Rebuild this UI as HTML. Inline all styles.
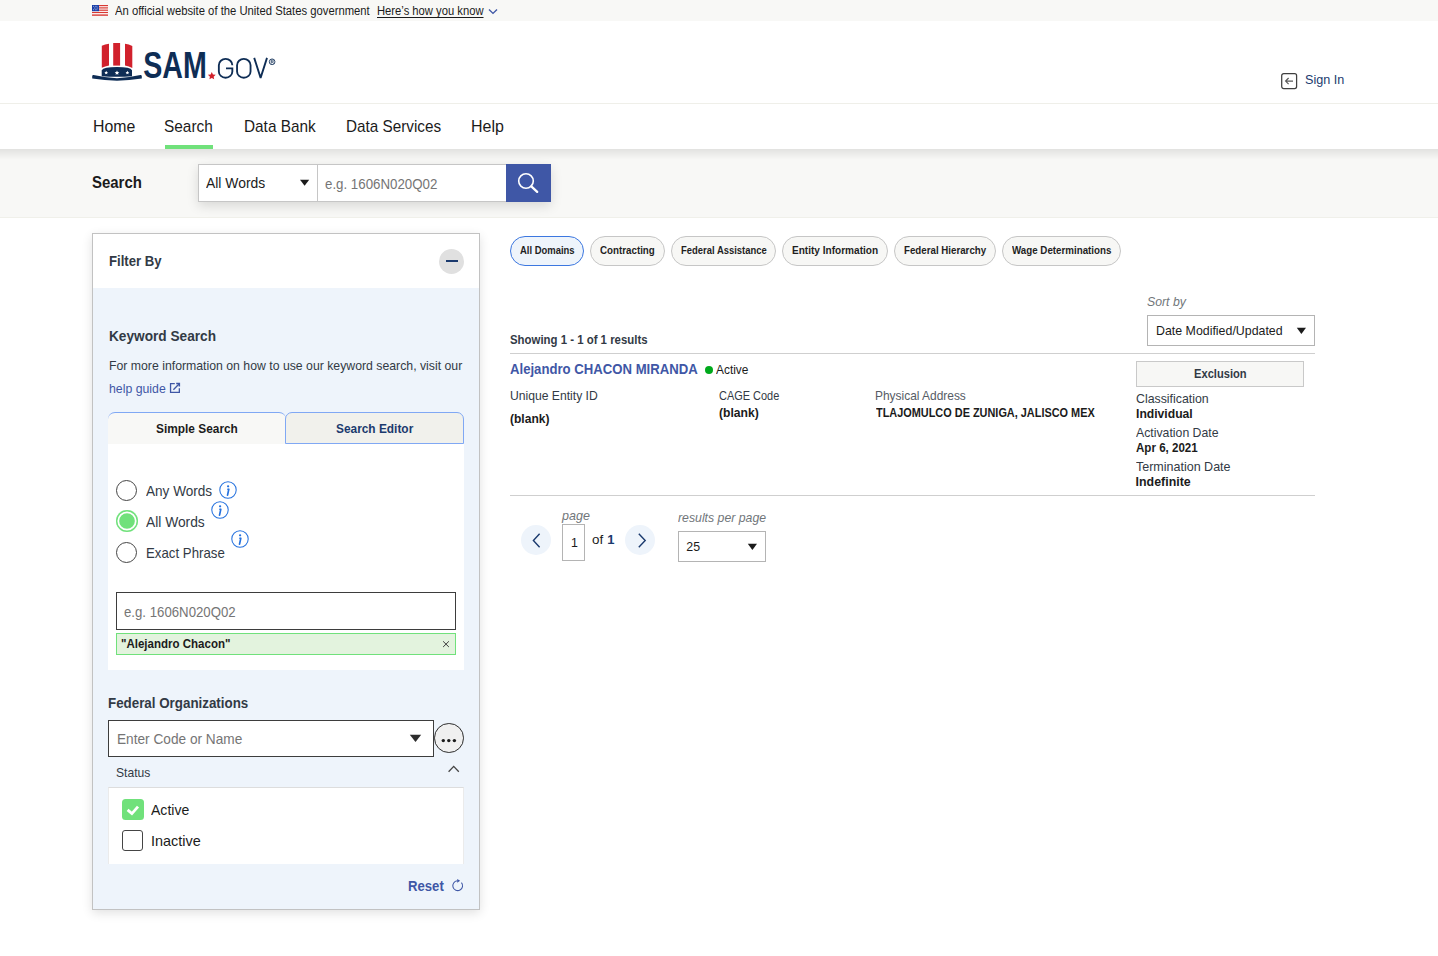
<!DOCTYPE html>
<html><head><meta charset="utf-8"><title>SAM.gov Search</title>
<style>
html,body{margin:0;padding:0;}
body{width:1438px;height:956px;overflow:hidden;background:#fff;position:relative;font-family:"Liberation Sans",sans-serif;}
.t{position:absolute;white-space:nowrap;line-height:1;font-family:"Liberation Sans",sans-serif;}
.b{position:absolute;box-sizing:border-box;}
svg{position:absolute;overflow:visible;}

</style></head><body>
<!-- banner -->
<div class="b" style="left:0;top:0;width:1438px;height:21px;background:#f8f8f6;"></div>
<svg style="left:92px;top:5px" width="16" height="11" viewBox="0 0 16 11">
  <rect width="16" height="11" fill="#fff"/>
  <g fill="#d83933"><rect y="0" width="16" height="1.2"/><rect y="2.3" width="16" height="1.2"/><rect y="4.6" width="16" height="1.2"/><rect y="6.9" width="16" height="1.2"/><rect y="9.4" width="16" height="1.4"/></g>
  <rect width="7" height="6.2" fill="#1a3fa8"/>
  <g fill="#fff"><circle cx="1.5" cy="1.3" r=".45"/><circle cx="3.2" cy="1.3" r=".45"/><circle cx="4.9" cy="1.3" r=".45"/><circle cx="2.3" cy="3" r=".45"/><circle cx="4" cy="3" r=".45"/><circle cx="5.7" cy="3" r=".45"/><circle cx="1.5" cy="4.7" r=".45"/><circle cx="3.2" cy="4.7" r=".45"/><circle cx="4.9" cy="4.7" r=".45"/></g>
</svg>
<svg style="left:488px;top:8px" width="10" height="7" viewBox="0 0 10 7"><path d="M1 1.6 L5 5.4 L9 1.6" fill="none" stroke="#3f57a6" stroke-width="1.4"/></svg>

<!-- header -->
<svg style="left:0;top:0" width="300" height="100" viewBox="0 0 300 100">
  <g fill="#d1212c">
    <path d="M101.8 45.8 Q105 44.3 109 43.7 L109 65.6 Q105 66.3 101.8 67.7 Z"/>
    <path d="M113.2 43 L120.1 43 L120.1 65.6 L113.2 65.6 Z"/>
    <path d="M125 43.7 Q129 44.3 132.3 46 L132.3 68 Q129 66.3 125 65.6 Z"/>
  </g>
  <path fill="#0e2d55" d="M101.7 70.3 Q103.5 67.2 117 67.1 Q130.5 67.2 132 70.3 L132 76.3 Q117 77.3 101.7 76.3 Z"/>
  <g fill="#fff">
    <path d="M106.2 70.8 l.55 1.2 1.3.15 -.95.85 .25 1.3 -1.15-.65 -1.15.65 .25-1.3 -.95-.85 1.3-.15z"/>
    <path d="M117 70.5 l.7 1.5 1.6.2 -1.2 1.05 .3 1.6 -1.4-.8 -1.4.8 .3-1.6 -1.2-1.05 1.6-.2z"/>
    <path d="M127.4 70.8 l.55 1.2 1.3.15 -.95.85 .25 1.3 -1.15-.65 -1.15.65 .25-1.3 -.95-.85 1.3-.15z"/>
  </g>
  <path fill="#0e2d55" d="M92.2 76.1 Q92.4 75 93.6 75.1 Q105 77.7 117 78.3 Q129 77.7 140.4 75.1 Q141.6 75 141.8 76.1 L141.8 78.6 Q129 80.5 117 80.7 Q105 80.5 92.2 78.6 Z"/>
  <!-- SAM -->
  <text x="143.2" y="78.3" font-family="Liberation Sans" font-weight="700" font-size="36.5" fill="#0e2d55" textLength="63.5" lengthAdjust="spacingAndGlyphs">SAM</text>
  <path fill="#d1212c" d="M211.8 72 l1.15 2.5 2.75.3 -2.05 1.85 .55 2.7 -2.4-1.4 -2.4 1.4 .55-2.7 -2.05-1.85 2.75-.3z"/>
  <g fill="none" stroke="#0e2d55" stroke-width="1.85"><path d="M232.35 65.2 A6.75 6.35 0 0 0 218.85 65.2 V71.4 A6.75 6.35 0 0 0 232.35 71.4 V68.3 H226"/><path d="M237.05 65.2 A6.75 6.35 0 0 1 250.55 65.2 V71.4 A6.75 6.35 0 0 1 237.05 71.4 Z"/><path d="M254.2 57.9 L260.6 77.9 L267 57.9" stroke-linejoin="bevel"/></g>
  <circle cx="272.1" cy="61.8" r="2.85" fill="none" stroke="#0e2d55" stroke-width=".85"/>
  <path d="M271.2 63.6 V60.1 H272.5 Q273.4 60.1 273.4 61 Q273.4 61.9 272.5 61.9 H271.2 M272.5 61.9 L273.5 63.6" fill="none" stroke="#0e2d55" stroke-width=".7"/>
</svg>
<svg style="left:1281px;top:73px" width="17" height="17" viewBox="0 0 17 17">
  <rect x=".7" y=".7" width="14.9" height="14.9" rx="2" fill="none" stroke="#404040" stroke-width="1.25"/>
  <path d="M12 8.1 H5.2 M7.6 5 L4.6 8.1 L7.6 11.2" fill="none" stroke="#5a5a5a" stroke-width="1.2"/>
</svg>
<div class="b" style="left:0;top:103px;width:1438px;height:1px;background:#efefe9;"></div>

<!-- search band -->
<div class="b" style="left:0;top:149px;width:1438px;height:68px;background:#f8f8f6;"></div>
<div class="b" style="left:0;top:217px;width:1438px;height:1px;background:#f0f0ea;"></div>
<div class="b" style="left:0;top:149px;width:1438px;height:11px;background:linear-gradient(#e2e2e0,rgba(248,248,246,0));"></div>
<div class="b" style="left:165px;top:145px;width:48px;height:4px;background:#70e17b;"></div>
<div class="b" style="left:198px;top:164px;width:353px;height:38px;box-shadow:0 4px 12px rgba(0,0,0,0.13);"></div>
<div class="b" style="left:198px;top:164px;width:120px;height:38px;background:#fff;border:1px solid #c6c6c6;"></div>
<div class="b" style="left:317px;top:164px;width:190px;height:38px;background:#fff;border:1px solid #c6c6c6;"></div>
<div class="b" style="left:506px;top:164px;width:45px;height:38px;background:#3f57a6;"></div>
<svg style="left:300px;top:179px" width="10" height="7" viewBox="0 0 10 7"><path d="M0 .7 H9.2 L4.6 6.8 Z" fill="#1b1b1b"/></svg>
<svg style="left:515px;top:170px" width="26" height="26" viewBox="0 0 26 26"><circle cx="11" cy="11" r="7.3" fill="none" stroke="#fff" stroke-width="1.6"/><path d="M16.3 16.4 L22.2 21.9" stroke="#fff" stroke-width="2.3" stroke-linecap="round"/></svg>

<!-- filter panel -->
<div class="b" style="left:92px;top:233px;width:388px;height:677px;border:1px solid #c2c2c2;background:#eef4fb;box-shadow:0 3px 10px rgba(0,0,0,0.12);"></div>
<div class="b" style="left:93px;top:234px;width:386px;height:54px;background:#fff;"></div>
<div class="b" style="left:439px;top:248.5px;width:25px;height:25px;border-radius:50%;background:#e0e0e0;"></div>
<div class="b" style="left:446px;top:260px;width:11.5px;height:2.4px;background:#1b3a6e;"></div>
<svg style="left:169px;top:382px" width="12" height="12" viewBox="0 0 12 12"><path d="M5.8 1.55 H1.55 V10.3 H10.35 V6.2" fill="none" stroke="#3f57a6" stroke-width="1.3"/><path d="M7.2 1.6 H10.35 V4.5" fill="none" stroke="#3f57a6" stroke-width="1.5"/><path d="M4.4 7.8 L10 2" fill="none" stroke="#3f57a6" stroke-width="1.3"/></svg>
<!-- tabs -->
<div class="b" style="left:108px;top:412px;width:178px;height:32px;background:#f8f8f6;border-top:1.4px solid #80a8f4;border-radius:7px 7px 0 0;"></div>
<div class="b" style="left:285px;top:412px;width:179px;height:32px;background:#f1f1ec;border:1.3px solid #80a8f4;border-radius:7px 7px 0 0;"></div>
<div class="b" style="left:108px;top:444px;width:356px;height:226px;background:#fff;"></div>
<!-- radios -->
<div class="b" style="left:116px;top:480px;width:21px;height:21px;border-radius:50%;border:1.3px solid #454545;"></div>
<div class="b" style="left:115.6px;top:510.3px;width:22px;height:22px;border-radius:50%;background:#70e17b;box-shadow:inset 0 0 0 1.4px #70e17b, inset 0 0 0 3.15px #fff;"></div>
<div class="b" style="left:116px;top:541.5px;width:21px;height:21px;border-radius:50%;border:1.3px solid #454545;"></div>
<svg style="left:218.6px;top:480.5px" width="18" height="18" viewBox="0 0 18 18"><circle cx="9" cy="9" r="8.2" fill="none" stroke="#2672de" stroke-width="1.05"/><circle cx="9.1" cy="5.3" r="1.15" fill="#2672de"/><path d="M9.75 8.3 L8.55 14.1" stroke="#2672de" stroke-width="1.7" stroke-linecap="round"/><path d="M8 8.2 H10.1" stroke="#2672de" stroke-width="1"/></svg>
<svg style="left:211.4px;top:500.5px" width="18" height="18" viewBox="0 0 18 18"><circle cx="9" cy="9" r="8.2" fill="none" stroke="#2672de" stroke-width="1.05"/><circle cx="9.1" cy="5.3" r="1.15" fill="#2672de"/><path d="M9.75 8.3 L8.55 14.1" stroke="#2672de" stroke-width="1.7" stroke-linecap="round"/><path d="M8 8.2 H10.1" stroke="#2672de" stroke-width="1"/></svg>
<svg style="left:231.3px;top:530.3px" width="18" height="18" viewBox="0 0 18 18"><circle cx="9" cy="9" r="8.2" fill="none" stroke="#2672de" stroke-width="1.05"/><circle cx="9.1" cy="5.3" r="1.15" fill="#2672de"/><path d="M9.75 8.3 L8.55 14.1" stroke="#2672de" stroke-width="1.7" stroke-linecap="round"/><path d="M8 8.2 H10.1" stroke="#2672de" stroke-width="1"/></svg>
<!-- keyword input & chip -->
<div class="b" style="left:116px;top:592px;width:340px;height:38px;background:#fff;border:1.8px solid #3d3d3d;"></div>
<div class="b" style="left:116px;top:633px;width:340px;height:22px;background:#e3f3de;border:1.5px solid #70e17b;"></div>
<svg style="left:442px;top:640px" width="8" height="8" viewBox="0 0 8 8"><path d="M1.1 1.3 L6.9 7 M6.9 1.3 L1.1 7" stroke="#3d3d3d" stroke-width="1"/></svg>
<!-- fed org -->
<div class="b" style="left:108px;top:720px;width:326px;height:37px;background:#fff;border:1.8px solid #3d3d3d;"></div>
<svg style="left:409px;top:734px" width="13" height="9" viewBox="0 0 13 9"><path d="M.8 .8 H12.2 L6.5 8 Z" fill="#2d2d2d"/></svg>
<div class="b" style="left:434.3px;top:723.2px;width:29.6px;height:29.6px;border-radius:50%;background:#f0f0f0;border:1.4px solid #2d2d2d;"></div>
<svg style="left:440px;top:737px" width="18" height="7" viewBox="0 0 18 7"><circle cx="3.3" cy="3.6" r="1.7" fill="#1b1b1b"/><circle cx="8.8" cy="3.6" r="1.7" fill="#1b1b1b"/><circle cx="14.4" cy="3.6" r="1.7" fill="#1b1b1b"/></svg>
<svg style="left:447px;top:764px" width="13" height="9" viewBox="0 0 13 9"><path d="M1.6 7.8 L6.7 2.4 L11.8 7.8" fill="none" stroke="#454545" stroke-width="1.3"/></svg>
<div class="b" style="left:108px;top:787px;width:356px;height:76.5px;background:#fff;border-top:1.6px solid #dddddd;border-left:1px solid #ebebeb;border-right:1px solid #ebebeb;"></div>
<div class="b" style="left:121.5px;top:799.3px;width:22px;height:21.2px;border-radius:3.5px;background:#70e17b;"></div>
<svg style="left:121.5px;top:799.3px" width="22" height="21" viewBox="0 0 22 21"><path d="M5.6 10.9 L9.9 14.6 L16 7.6" fill="none" stroke="#fff" stroke-width="2.8"/></svg>
<div class="b" style="left:122px;top:830.3px;width:21px;height:20.4px;border-radius:3px;border:1.3px solid #454545;"></div>
<svg style="left:451px;top:878px" width="13" height="14" viewBox="0 0 13 14"><path d="M10.45 4.55 A4.9 4.9 0 1 1 6.3 2.82" fill="none" stroke="#3f57a6" stroke-width="1.05"/><path d="M6.2 0.9 L9.1 2.85 L6.2 4.8 Z" fill="#3f57a6"/></svg>

<!-- domain chips -->
<div class="b" style="left:510px;top:236px;width:74px;height:30px;border-radius:15px;background:#eef4fb;border:1.3px solid #3c77e0;"></div>
<div class="b" style="left:590px;top:236px;width:75px;height:30px;border-radius:15px;background:#f7f7f5;border:1px solid #c6c6c6;"></div>
<div class="b" style="left:671px;top:236px;width:105px;height:30px;border-radius:15px;background:#f7f7f5;border:1px solid #c6c6c6;"></div>
<div class="b" style="left:782px;top:236px;width:106px;height:30px;border-radius:15px;background:#f7f7f5;border:1px solid #c6c6c6;"></div>
<div class="b" style="left:894px;top:236px;width:102px;height:30px;border-radius:15px;background:#f7f7f5;border:1px solid #c6c6c6;"></div>
<div class="b" style="left:1002px;top:236px;width:119px;height:30px;border-radius:15px;background:#f7f7f5;border:1px solid #c6c6c6;"></div>

<!-- sort -->
<div class="b" style="left:1147px;top:315px;width:168px;height:31px;background:#fff;border:1px solid #b4b4b4;"></div>
<svg style="left:1296px;top:327px" width="11" height="8" viewBox="0 0 11 8"><path d="M.8 .8 H10 L5.4 7 Z" fill="#1b1b1b"/></svg>
<div class="b" style="left:510px;top:353px;width:805px;height:1.2px;background:#cfcfcf;"></div>
<div class="b" style="left:705px;top:366px;width:8px;height:8px;border-radius:50%;background:#00a91c;"></div>
<div class="b" style="left:1136px;top:361px;width:168px;height:26px;background:#f7f7f5;border:1px solid #c9c9c9;"></div>
<div class="b" style="left:510px;top:495px;width:805px;height:1.2px;background:#cfcfcf;"></div>

<!-- pagination -->
<div class="b" style="left:521px;top:525px;width:30px;height:30px;border-radius:50%;background:#eef4fb;"></div>
<svg style="left:530px;top:532px" width="12" height="17" viewBox="0 0 12 17"><path d="M9.6 1.8 L3.4 8.5 L9.6 15.2" fill="none" stroke="#1b3a6e" stroke-width="1.4"/></svg>
<div class="b" style="left:562px;top:524px;width:23px;height:37px;background:#fff;border:1px solid #b4b4b4;"></div>
<div class="b" style="left:625px;top:525px;width:30px;height:30px;border-radius:50%;background:#eef4fb;"></div>
<svg style="left:636px;top:532px" width="12" height="17" viewBox="0 0 12 17"><path d="M2.8 1.8 L9.2 8.5 L2.8 15.2" fill="none" stroke="#1b3a6e" stroke-width="1.4"/></svg>
<div class="b" style="left:678px;top:531px;width:88px;height:31px;background:#fff;border:1px solid #b4b4b4;"></div>
<svg style="left:747px;top:543px" width="11" height="8" viewBox="0 0 11 8"><path d="M.8 .8 H10 L5.4 7 Z" fill="#1b1b1b"/></svg>

<div class='t' style='left:114.6px;top:5.2px;font-size:12px;font-weight:400;font-style:normal;color:#1b1b1b;transform:scaleX(0.9390);transform-origin:0 0;'>An official website of the United States government</div>
<div class='t' style='left:376.8px;top:5.2px;font-size:12px;font-weight:400;font-style:normal;color:#1b1b1b;transform:scaleX(0.9357);transform-origin:0 0;text-decoration:underline;text-underline-offset:1.5px;'>Here’s how you know</div>
<div class='t' style='left:92.5px;top:118.4px;font-size:16.4px;font-weight:400;font-style:normal;color:#1b1b1b;transform:scaleX(0.9668);transform-origin:0 0;'>Home</div>
<div class='t' style='left:164.4px;top:118.4px;font-size:16.4px;font-weight:400;font-style:normal;color:#1b1b1b;transform:scaleX(0.9393);transform-origin:0 0;'>Search</div>
<div class='t' style='left:243.7px;top:118.4px;font-size:16.4px;font-weight:400;font-style:normal;color:#1b1b1b;transform:scaleX(0.9365);transform-origin:0 0;'>Data Bank</div>
<div class='t' style='left:345.5px;top:118.2px;font-size:16.4px;font-weight:400;font-style:normal;color:#1b1b1b;transform:scaleX(0.9319);transform-origin:0 0;'>Data Services</div>
<div class='t' style='left:470.7px;top:118.4px;font-size:16.4px;font-weight:400;font-style:normal;color:#1b1b1b;transform:scaleX(0.9752);transform-origin:0 0;'>Help</div>
<div class='t' style='left:1305.0px;top:72.8px;font-size:13.6px;font-weight:400;font-style:normal;color:#1b3a6e;transform:scaleX(0.9288);transform-origin:0 0;'>Sign In</div>
<div class='t' style='left:91.9px;top:174.2px;font-size:16.4px;font-weight:700;font-style:normal;color:#1b1b1b;transform:scaleX(0.9124);transform-origin:0 0;'>Search</div>
<div class='t' style='left:206.2px;top:175.4px;font-size:15.3px;font-weight:400;font-style:normal;color:#1b1b1b;transform:scaleX(0.9086);transform-origin:0 0;'>All Words</div>
<div class='t' style='left:325.1px;top:175.8px;font-size:15.1px;font-weight:400;font-style:normal;color:#757575;transform:scaleX(0.8804);transform-origin:0 0;'>e.g. 1606N020Q02</div>
<div class='t' style='left:108.5px;top:253.6px;font-size:14.5px;font-weight:700;font-style:normal;color:#323a45;transform:scaleX(0.9079);transform-origin:0 0;'>Filter By</div>
<div class='t' style='left:108.5px;top:329.2px;font-size:14.3px;font-weight:700;font-style:normal;color:#323a45;transform:scaleX(0.9555);transform-origin:0 0;'>Keyword Search</div>
<div class='t' style='left:108.6px;top:360.0px;font-size:12.2px;font-weight:400;font-style:normal;color:#323a45;transform:scaleX(1.0067);transform-origin:0 0;'>For more information on how to use our keyword search, visit our</div>
<div class='t' style='left:108.6px;top:382.9px;font-size:12.2px;font-weight:400;font-style:normal;color:#3f57a6;transform:scaleX(1.0086);transform-origin:0 0;'>help guide</div>
<div class='t' style='left:155.9px;top:423.2px;font-size:12.8px;font-weight:700;font-style:normal;color:#1b1b1b;transform:scaleX(0.9282);transform-origin:0 0;'>Simple Search</div>
<div class='t' style='left:335.9px;top:423.3px;font-size:12.8px;font-weight:700;font-style:normal;color:#1b3a6e;transform:scaleX(0.9285);transform-origin:0 0;'>Search Editor</div>
<div class='t' style='left:145.6px;top:483.9px;font-size:14.3px;font-weight:400;font-style:normal;color:#323a45;transform:scaleX(0.9498);transform-origin:0 0;'>Any Words</div>
<div class='t' style='left:145.5px;top:514.7px;font-size:14.3px;font-weight:400;font-style:normal;color:#323a45;transform:scaleX(0.9645);transform-origin:0 0;'>All Words</div>
<div class='t' style='left:146.0px;top:545.9px;font-size:14.3px;font-weight:400;font-style:normal;color:#323a45;transform:scaleX(0.9262);transform-origin:0 0;'>Exact Phrase</div>
<div class='t' style='left:124.3px;top:604.5px;font-size:14.3px;font-weight:400;font-style:normal;color:#757575;transform:scaleX(0.9241);transform-origin:0 0;'>e.g. 1606N020Q02</div>
<div class='t' style='left:120.9px;top:638.0px;font-size:12px;font-weight:700;font-style:normal;color:#1b1b1b;transform:scaleX(0.9593);transform-origin:0 0;'>&quot;Alejandro Chacon&quot;</div>
<div class='t' style='left:108.4px;top:695.8px;font-size:14.3px;font-weight:700;font-style:normal;color:#323a45;transform:scaleX(0.9341);transform-origin:0 0;'>Federal Organizations</div>
<div class='t' style='left:117.1px;top:731.9px;font-size:14.3px;font-weight:400;font-style:normal;color:#757575;transform:scaleX(0.9553);transform-origin:0 0;'>Enter Code or Name</div>
<div class='t' style='left:116.0px;top:767.3px;font-size:12.4px;font-weight:400;font-style:normal;color:#323a45;transform:scaleX(0.9773);transform-origin:0 0;'>Status</div>
<div class='t' style='left:151.1px;top:803.2px;font-size:14.3px;font-weight:400;font-style:normal;color:#1b1b1b;transform:scaleX(0.9825);transform-origin:0 0;'>Active</div>
<div class='t' style='left:151.1px;top:834.0px;font-size:14.3px;font-weight:400;font-style:normal;color:#1b1b1b;transform:scaleX(1.0097);transform-origin:0 0;'>Inactive</div>
<div class='t' style='left:407.7px;top:878.9px;font-size:14.3px;font-weight:700;font-style:normal;color:#3f57a6;transform:scaleX(0.9180);transform-origin:0 0;'>Reset</div>
<div class='t' style='left:519.8px;top:245.3px;font-size:11.3px;font-weight:700;font-style:normal;color:#1f1f1f;transform:scaleX(0.8358);transform-origin:0 0;'>All Domains</div>
<div class='t' style='left:600.4px;top:245.3px;font-size:11.3px;font-weight:700;font-style:normal;color:#1f1f1f;transform:scaleX(0.8641);transform-origin:0 0;'>Contracting</div>
<div class='t' style='left:680.8px;top:245.3px;font-size:11.3px;font-weight:700;font-style:normal;color:#1f1f1f;transform:scaleX(0.8363);transform-origin:0 0;'>Federal Assistance</div>
<div class='t' style='left:792.4px;top:245.3px;font-size:11.3px;font-weight:700;font-style:normal;color:#1f1f1f;transform:scaleX(0.8906);transform-origin:0 0;'>Entity Information</div>
<div class='t' style='left:904.2px;top:245.3px;font-size:11.3px;font-weight:700;font-style:normal;color:#1f1f1f;transform:scaleX(0.8609);transform-origin:0 0;'>Federal Hierarchy</div>
<div class='t' style='left:1012.1px;top:245.3px;font-size:11.3px;font-weight:700;font-style:normal;color:#1f1f1f;transform:scaleX(0.8635);transform-origin:0 0;'>Wage Determinations</div>
<div class='t' style='left:1147.0px;top:296.3px;font-size:12.2px;font-weight:400;font-style:italic;color:#71767a;transform:scaleX(1.0079);transform-origin:0 0;'>Sort by</div>
<div class='t' style='left:1156.0px;top:325.2px;font-size:12.6px;font-weight:400;font-style:normal;color:#1b1b1b;transform:scaleX(0.9831);transform-origin:0 0;'>Date Modified/Updated</div>
<div class='t' style='left:509.9px;top:333.5px;font-size:12.2px;font-weight:700;font-style:normal;color:#323a45;transform:scaleX(0.9359);transform-origin:0 0;'>Showing 1 - 1 of 1 results</div>
<div class='t' style='left:509.5px;top:361.8px;font-size:14.2px;font-weight:700;font-style:normal;color:#3f57a6;transform:scaleX(0.9268);transform-origin:0 0;'>Alejandro CHACON MIRANDA</div>
<div class='t' style='left:715.8px;top:363.8px;font-size:12.2px;font-weight:400;font-style:normal;color:#1b1b1b;transform:scaleX(0.9768);transform-origin:0 0;'>Active</div>
<div class='t' style='left:510.1px;top:390.1px;font-size:12.4px;font-weight:400;font-style:normal;color:#323a45;transform:scaleX(0.9800);transform-origin:0 0;'>Unique Entity ID</div>
<div class='t' style='left:510.1px;top:412.7px;font-size:12.4px;font-weight:700;font-style:normal;color:#1b1b1b;transform:scaleX(0.9709);transform-origin:0 0;'>(blank)</div>
<div class='t' style='left:718.6px;top:390.3px;font-size:12.4px;font-weight:400;font-style:normal;color:#323a45;transform:scaleX(0.8835);transform-origin:0 0;'>CAGE Code</div>
<div class='t' style='left:718.6px;top:406.7px;font-size:12.4px;font-weight:700;font-style:normal;color:#1b1b1b;transform:scaleX(0.9783);transform-origin:0 0;'>(blank)</div>
<div class='t' style='left:875.2px;top:390.0px;font-size:12.4px;font-weight:400;font-style:normal;color:#565c65;transform:scaleX(0.9627);transform-origin:0 0;'>Physical Address</div>
<div class='t' style='left:875.6px;top:406.7px;font-size:12.2px;font-weight:700;font-style:normal;color:#1b1b1b;transform:scaleX(0.8948);transform-origin:0 0;'>TLAJOMULCO DE ZUNIGA, JALISCO MEX</div>
<div class='t' style='left:1194.0px;top:367.7px;font-size:12.4px;font-weight:700;font-style:normal;color:#323a45;transform:scaleX(0.8994);transform-origin:0 0;'>Exclusion</div>
<div class='t' style='left:1135.6px;top:393.3px;font-size:12.4px;font-weight:400;font-style:normal;color:#323a45;transform:scaleX(0.9965);transform-origin:0 0;'>Classification</div>
<div class='t' style='left:1135.6px;top:407.9px;font-size:12.4px;font-weight:700;font-style:normal;color:#1b1b1b;transform:scaleX(0.9813);transform-origin:0 0;'>Individual</div>
<div class='t' style='left:1135.6px;top:426.9px;font-size:12.4px;font-weight:400;font-style:normal;color:#323a45;transform:scaleX(0.9904);transform-origin:0 0;'>Activation Date</div>
<div class='t' style='left:1135.6px;top:442.0px;font-size:12.4px;font-weight:700;font-style:normal;color:#1b1b1b;transform:scaleX(0.9337);transform-origin:0 0;'>Apr 6, 2021</div>
<div class='t' style='left:1135.6px;top:460.9px;font-size:12.4px;font-weight:400;font-style:normal;color:#323a45;transform:scaleX(1.0093);transform-origin:0 0;'>Termination Date</div>
<div class='t' style='left:1135.6px;top:475.9px;font-size:12.4px;font-weight:700;font-style:normal;color:#1b1b1b;'>Indefinite</div>
<div class='t' style='left:562.1px;top:510.0px;font-size:12.6px;font-weight:400;font-style:italic;color:#71767a;transform:scaleX(0.9937);transform-origin:0 0;'>page</div>
<div class='t' style='left:570.9px;top:536.8px;font-size:12.4px;font-weight:400;font-style:normal;color:#1b1b1b;'>1</div>
<div class='t' style='left:592.2px;top:532.8px;font-size:13px;font-weight:400;font-style:normal;color:#1b1b1b;transform:scaleX(1.0310);transform-origin:0 0;'>of</div>
<div class='t' style='left:607.3px;top:532.8px;font-size:13px;font-weight:700;font-style:normal;color:#1b3a6e;'>1</div>
<div class='t' style='left:677.6px;top:512.1px;font-size:12.6px;font-weight:400;font-style:italic;color:#71767a;transform:scaleX(0.9750);transform-origin:0 0;'>results per page</div>
<div class='t' style='left:686.3px;top:541.2px;font-size:12.4px;font-weight:400;font-style:normal;color:#1b1b1b;'>25</div>
</body></html>
